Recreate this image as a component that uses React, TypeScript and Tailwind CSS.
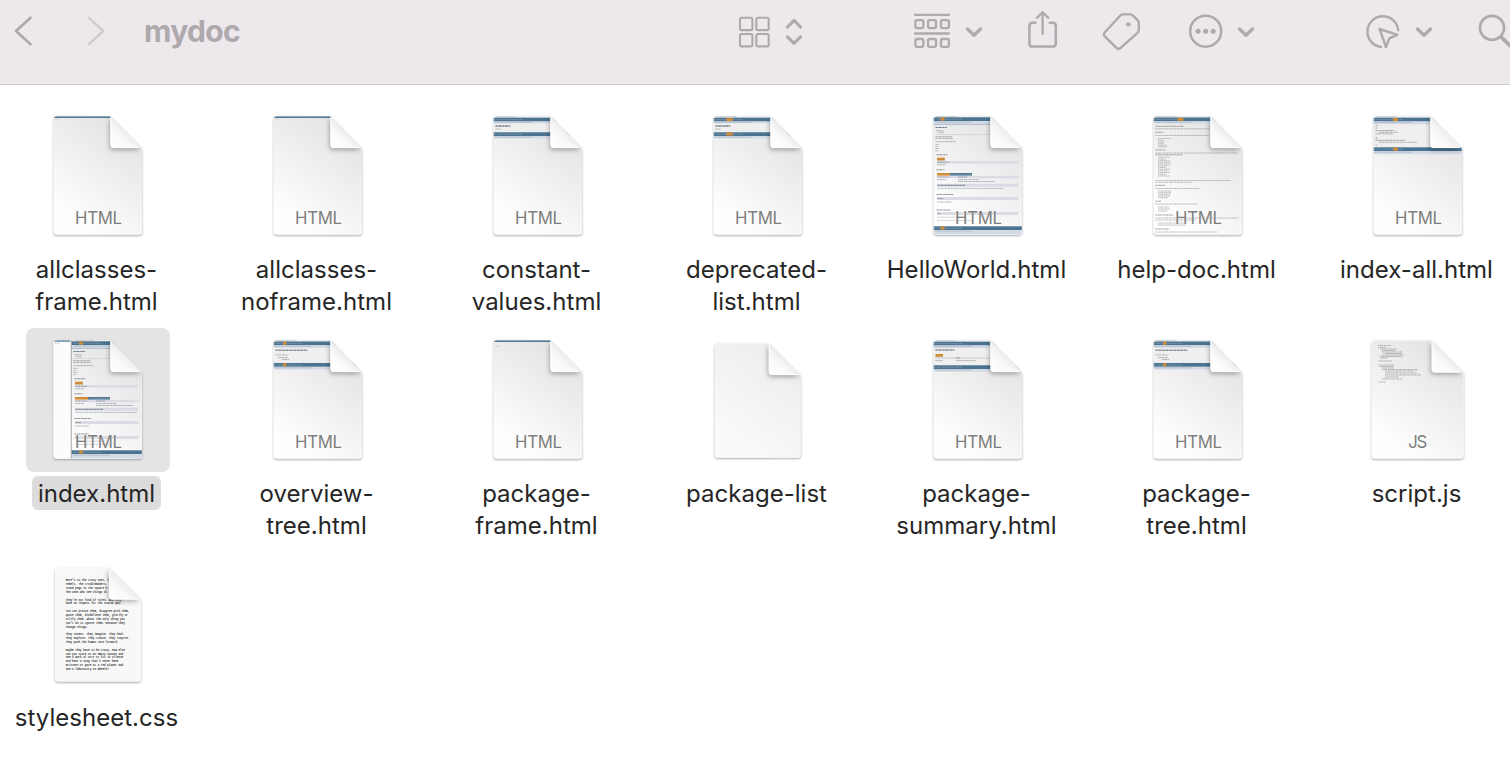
import React from "react";

type Kind =
  | "plain"
  | "constant"
  | "deprecated"
  | "hello"
  | "help"
  | "indexAll"
  | "index"
  | "tree"
  | "blankTop"
  | "summary"
  | "document"
  | "script"
  | "prose";

interface FileItem {
  lines: string[];
  kind: Kind;
  selected?: boolean;
}

const files: FileItem[] = [
  { lines: ["allclasses-", "frame.html"], kind: "plain" },
  { lines: ["allclasses-", "noframe.html"], kind: "plain" },
  { lines: ["constant-", "values.html"], kind: "constant" },
  { lines: ["deprecated-", "list.html"], kind: "deprecated" },
  { lines: ["HelloWorld.html"], kind: "hello" },
  { lines: ["help-doc.html"], kind: "help" },
  { lines: ["index-all.html"], kind: "indexAll" },
  { lines: ["index.html"], kind: "index", selected: true },
  { lines: ["overview-", "tree.html"], kind: "tree" },
  { lines: ["package-", "frame.html"], kind: "blankTop" },
  { lines: ["package-list"], kind: "document" },
  { lines: ["package-", "summary.html"], kind: "summary" },
  { lines: ["package-", "tree.html"], kind: "tree" },
  { lines: ["script.js"], kind: "script" },
  { lines: ["stylesheet.css"], kind: "prose" },
];

const BLUE = "#4a7391";
const PALE = "#d3dae5";
const ORANGE = "#d08c35";

/* A miniature line of unreadable print. */
function Print({ x, y, w, c = "#8d8f93", h = 0.8, d = "1.6 .35 .9 .3 2.3 .5 1.2 .3" }: { x: number; y: number; w: number; c?: string; h?: number; d?: string }) {
  return <line x1={x} x2={x + w} y1={y} y2={y} stroke={c} strokeWidth={h} strokeDasharray={d} strokeOpacity={0.82} />;
}

function NavBand({ y, x = 27, tab, tabW = 4, pale = 2.6 }: { y: number; x?: number; tab?: number; tabW?: number; pale?: number }) {
  return (
    <g>
      <rect x={x} y={y} width={120} height={3.8} fill={BLUE} />
      <Print x={x + 1.5} y={y + 1.9} w={28} c="#8ba5b8" />
      {tab !== undefined && <rect x={x + tab} y={y + 0.3} width={tabW} height={3} fill={ORANGE} />}
      <rect x={x} y={y + 3.8} width={120} height={pale} fill={PALE} />
      <Print x={x + 1.5} y={y + 4.8} w={37} c="#98a9bd" />
    </g>
  );
}

function ClassPage({ x, dx }: { x: number; dx: number }) {
  const o = (n: number) => n + dx;
  const bar = (y: number, h: number, c = "#d9dce3") => <rect x={o(31)} y={y} width={112.3 - o(31)} height={h} fill={c} />;
  return (
    <g>
      <Print x={o(30)} y={12.5} w={20} />
      <NavBand x={x} y={13.3} tab={7.5} pale={4} />
      <Print x={o(28)} y={20.4} w={58} c="#9aa9bb" />
      <Print x={o(29.5)} y={23.5} w={11.5} c="#45617a" h={1.2} />
      <Print x={o(30)} y={26.8} w={8} />
      <Print x={o(32)} y={28.6} w={6} />
      <rect x={o(29)} y={30} width={60} height={0.4} fill="#bbb" />
      <Print x={o(29.5)} y={32.8} w={17} h={1.1} />
      <Print x={o(29.5)} y={34.5} w={18} />
      <Print x={o(29.5)} y={37.6} w={20} />
      <Print x={o(29.5)} y={40.4} w={4} />
      <Print x={o(29.5)} y={42.6} w={2.8} />
      <Print x={o(29.5)} y={44.6} w={4} />
      <Print x={o(29.5)} y={46.7} w={2.6} />
      <Print x={o(30.5)} y={50.7} w={11} c="#777" h={1.1} />
      <rect x={o(31)} y={53.7} width={7.8} height={2.8} fill={ORANGE} />
      {bar(57, 2.5)}
      <Print x={o(31)} y={58.2} w={12} c="#64788d" />
      <Print x={o(31)} y={60.8} w={9} />
      <Print x={o(30.5)} y={65.7} w={8} c="#777" h={1.1} />
      <rect x={o(31)} y={69} width={13} height={2.6} fill={ORANGE} />
      <rect x={o(44)} y={69} width={22} height={2.6} fill={BLUE} />
      <Print x={o(45)} y={70.3} w={20} c="#93a9ba" />
      {bar(72, 2.2)}
      <Print x={o(31)} y={73} w={12} />
      <Print x={o(52)} y={73} w={9} c="#6f8092" />
      <Print x={o(31)} y={75.6} w={9} />
      <Print x={o(52)} y={75.6} w={21} />
      <Print x={o(52)} y={77.5} w={37} />
      {bar(79.8, 3)}
      <Print x={o(31.4)} y={81.3} w={28} c="#5f6770" h={1.1} />
      <Print x={o(31.4)} y={84.4} w={dx ? 62 : 66} c="#969ba4" />
      <Print x={o(30.5)} y={90.5} w={17} c="#777" h={1.1} />
      {bar(93, 3)}
      <Print x={o(31.4)} y={94.6} w={5.5} c="#5f6770" />
      <Print x={o(31.4)} y={98} w={14} />
      <Print x={o(30.5)} y={106} w={14} c="#777" h={1.1} />
      {bar(108, 3)}
      <Print x={o(31.4)} y={109.5} w={3} c="#5f6770" />
      <Print x={o(31.4)} y={113.2} w={29} c="#b0b4ba" />
      <Print x={o(31.4)} y={116.4} w={34} c="#b0b4ba" />
      <NavBand x={x} y={122.3} tab={7.5} pale={5} />
    </g>
  );
}

function Preview({ kind }: { kind: Kind }) {
  switch (kind) {
    case "plain":
    case "blankTop":
      return (
        <g>
          <rect x={27} y={11} width={90} height={3} fill="#4f7a94" />
          <Print x={29} y={kind === "plain" ? 15 : 18.2} w={4.5} c="#b5b7ba" h={0.7} />
        </g>
      );
    case "constant":
    case "deprecated": {
      const tab = kind === "deprecated" ? 13.3 : undefined;
      return (
        <g>
          <Print x={30} y={12.6} w={20} />
          <NavBand y={13.7} tab={tab} tabW={6.5} pale={2} />
          <rect x={27} y={19.5} width={90} height={8.8} fill="#efefef" />
          <Print x={29.5} y={22} w={15} c="#5c646c" h={1.3} />
          <Print x={29.5} y={25} w={5} />
          <NavBand y={28.3} tab={tab} tabW={6.5} pale={2.3} />
        </g>
      );
    }
    case "tree":
      return (
        <g>
          <Print x={30} y={12.6} w={20} />
          <NavBand y={13.5} tab={10} tabW={3.5} />
          <rect x={27} y={19.9} width={90} height={15.1} fill="#efefef" />
          <Print x={29.5} y={22.2} w={32} c="#70777e" h={1.4} />
          <Print x={29.5} y={27} w={12} />
          <Print x={32.5} y={29.6} w={9} />
          <Print x={36} y={31.5} w={7} />
          <NavBand y={35} tab={10} tabW={3.5} />
        </g>
      );
    case "summary":
      return (
        <g>
          <Print x={30} y={12.6} w={20} />
          <NavBand y={13.7} pale={2.6} />
          <rect x={27} y={20.1} width={90} height={17.2} fill="#efefef" />
          <Print x={29.5} y={22} w={19} c="#70777e" h={1.3} />
          <rect x={29.5} y={26} width={7.5} height={2.8} fill={ORANGE} />
          <rect x={29.5} y={29} width={90} height={2.1} fill="#d9dce3" />
          <Print x={50} y={30} w={4} c="#646b75" />
          <Print x={29.5} y={32.6} w={7} />
          <Print x={50} y={32.6} w={20} />
          <NavBand y={37.3} pale={2.6} />
        </g>
      );
    case "indexAll":
      return (
        <g>
          <Print x={30} y={12.6} w={20} />
          <NavBand y={13.7} tab={20} tabW={5} pale={3} />
          <rect x={27} y={20.5} width={90} height={22.8} fill="#efefef" />
          <Print x={29.5} y={21.5} w={3} />
          <Print x={29.5} y={24} w={2} c="#555" />
          <Print x={29.5} y={26.6} w={19} c="#71777f" />
          <Print x={33} y={28.3} w={19} />
          <Print x={29.5} y={29.8} w={18} />
          <Print x={29.5} y={34} w={2} c="#555" />
          <Print x={29.5} y={36.4} w={30} c="#71777f" />
          <Print x={33} y={38.3} w={38} />
          <Print x={29.5} y={41} w={2} />
          <NavBand y={43.3} tab={20} tabW={5} pale={3} />
        </g>
      );
    case "hello":
      return <ClassPage x={27} dx={0} />;
    case "index":
      return (
        <g>
          <rect x={27} y={11} width={18} height={121} fill="#fcfcfc" />
          <rect x={27} y={11} width={17.3} height={2.7} fill="#4f7a94" />
          <Print x={29} y={15.3} w={5} c="#aaa" h={0.7} />
          <ClassPage x={45.6} dx={18} />
          <rect x={44.8} y={12} width={0.8} height={120} fill="#8f9396" />
        </g>
      );
    case "help": {
      const rows: [number, number, number][] = [
        [2.5, 22.3, 28], [2.5, 24.8, 55], [2.5, 28.3, 8], [2.5, 31.5, 53],
        [5, 34.5, 13], [5, 36.3, 5], [5, 38, 7], [5, 39.7, 6], [5, 41.3, 9], [5, 43, 9],
        [2.5, 46, 10], [2.5, 49, 82], [2.5, 50.8, 27],
        [5, 53.2, 12], [5, 55, 8], [5, 56.7, 12], [5, 58.4, 12], [5, 60.1, 13], [5, 61.8, 11],
        [5, 63.5, 8], [5, 65.2, 12], [5, 66.9, 11], [5, 68.6, 12], [5, 70.3, 8], [5, 72, 12],
        [2.5, 76.5, 75], [2.5, 78.3, 37], [2.5, 81.3, 10], [2.5, 84.5, 44],
        [5, 87, 13], [5, 88.7, 13], [5, 90.4, 12], [5, 92.1, 12], [5, 93.8, 10],
        [2.5, 97.2, 6], [2.5, 100, 42], [5, 103, 11], [5, 105, 12], [5, 107, 9],
        [2.5, 111, 18], [2.5, 114, 83], [2.5, 116, 40], [5, 119, 26], [5, 121, 28],
        [2.5, 125, 14], [2.5, 128, 62],
      ];
      return (
        <g>
          <Print x={30} y={12.5} w={20} />
          <NavBand y={13.5} tab={24.5} tabW={6} pale={2.2} />
          {rows.map(([x, y, w], i) => (
            <Print key={i} x={27 + x} y={y} w={w} c={x === 2.5 && w < 30 ? "#6c6c6c" : "#999"} />
          ))}
        </g>
      );
    }
    case "script": {
      const rows: [number, number, number][] = [
        [32, 17.5, 13], [32, 19.5, 8], [34, 21, 17], [36, 22.5, 13], [36, 24, 20], [39, 25.5, 17],
        [36, 27, 22], [34, 28.5, 22], [34, 30, 8], [32, 33, 14], [32, 37, 16],
        [34, 38.5, 14], [36, 40, 12], [36, 41.5, 36], [39, 43, 30], [39, 45, 32], [39, 47, 36],
        [39, 49, 14], [36, 51, 20], [32, 54, 8],
      ];
      return (
        <g>
          {rows.map(([x, y, w], i) => (
            <Print key={i} x={x} y={y} w={w} c="#8f8f8f" h={0.8} />
          ))}
        </g>
      );
    }
    default:
      return null;
  }
}

/* Baseline of each line of the text document, with its words. */
const prose: [number, string][] = [
  [29.2, "Here's to the crazy ones. The"],
  [33.1, "rebels. The troublemakers."],
  [37, "round pegs in the square h"],
  [40.8, "The ones who see things di"],
  [48.5, "They're not fond of rules. And they"],
  [52.3, "have no respect for the status quo."],
  [60, "You can praise them, disagree with them,"],
  [63.9, "quote them, disbelieve them, glorify or"],
  [67.8, "vilify them. About the only thing you"],
  [71.6, "can't do is ignore them. Because they"],
  [75.5, "change things."],
  [83.2, "They invent. They imagine. They heal."],
  [87.1, "They explore. They create. They inspire."],
  [90.9, "They push the human race forward."],
  [98.7, "Maybe they have to be crazy. How else"],
  [102.6, "can you stare at an empty canvas and"],
  [106.4, "see a work of art? Or sit in silence"],
  [110.3, "and hear a song that's never been"],
  [114.1, "written? Or gaze at a red planet and"],
  [117.9, "see a laboratory on wheels?"],
];

/* left, top, right, bottom, fold x, fold y */
function sheetBox(kind: Kind): [number, number, number, number, number, number] {
  if (kind === "document") return [28.7, 15.5, 114.7, 129.7, 82.8, 47];
  if (kind === "script") return [25.7, 12.4, 117.6, 130.6, 85.7, 44.5];
  if (kind === "prose") return [29, 16, 115, 129.7, 83, 47.5];
  return [27.7, 12.2, 116, 130.6, 84.5, 44];
}

function FileIcon({ kind, id }: { kind: Kind; id: string }) {
  const [l, t, r, b, fx, fy] = sheetBox(kind);
  const sheet = `M${l + 3} ${t}H${fx}L${r - 1} ${fy - 0.8}Q${r} ${fy + 0.4} ${r} ${fy + 2}V${b - 3}Q${r} ${b} ${r - 3} ${b}H${l + 3}Q${l} ${b} ${l} ${b - 3}V${t + 3}Q${l} ${t} ${l + 3} ${t}Z`;
  const fold = `M${fx} ${t}L${r - 1} ${fy - 0.8}Q${r - 1} ${fy} ${r - 3} ${fy}H${fx + 3}Q${fx} ${fy} ${fx} ${fy - 3}Z`;
  const label = kind === "document" || kind === "prose" ? null : kind === "script" ? "JS" : "HTML";
  return (
    <svg width="144" height="144" viewBox="0 0 144 144" className="block">
      <defs>
        <linearGradient id={`${id}p`} x1="0.8" y1="0.15" x2="0.35" y2="0.95">
          <stop offset="0" stopColor="#e5e5e5" />
          <stop offset="0.5" stopColor="#f1f1f1" />
          <stop offset="1" stopColor="#fefefe" />
        </linearGradient>
        <linearGradient id={`${id}f`} x1="0.05" y1="0.95" x2="0.55" y2="0.4">
          <stop offset="0" stopColor="#ffffff" />
          <stop offset="0.5" stopColor="#fafafa" />
          <stop offset="1" stopColor="#e9e9e9" />
        </linearGradient>
        <clipPath id={`${id}c`}>
          <path d={sheet} />
        </clipPath>
        <filter id={`${id}s`} x="-20%" y="-20%" width="140%" height="140%">
          <feGaussianBlur stdDeviation="1.1" />
        </filter>
        <filter id={`${id}b`} x="-50%" y="-50%" width="200%" height="200%">
          <feGaussianBlur stdDeviation="2.4" />
        </filter>
      </defs>
      <path d={sheet} fill="#000" fillOpacity="0.36" filter={`url(#${id}s)`} transform="translate(0 1.1)" />
      <path d={sheet} fill={kind === "prose" ? "#f8f8f8" : kind === "document" ? "#f6f6f6" : "#fff"} />
      {kind !== "prose" && <path d={sheet} fill={`url(#${id}p)`} fillOpacity={kind === "document" ? 0.5 : 1} />}
      <g clipPath={`url(#${id}c)`}>
        <Preview kind={kind} />
        {kind === "prose" && (
          <g fill="#3c3c3c" stroke="#3c3c3c" strokeWidth="0.1" fontFamily='"Liberation Mono", monospace' fontSize="2.66">
            {prose.map(([y, s]) => (
              <text key={y} x="39.7" y={y} textLength={s.length * 1.597}>
                {s}
              </text>
            ))}
          </g>
        )}
        <path d={fold} fill="#000" fillOpacity="0.34" filter={`url(#${id}b)`} transform="translate(-0.8 1.8)" />
      </g>
      <path d={sheet} fill="none" stroke="#fff" strokeOpacity="0.35" strokeWidth="0.8" />
      <path d={fold} fill={`url(#${id}f)`} />
      <path d={`M${fx + 0.4} ${t + 1}V${fy - 3}Q${fx + 0.4} ${fy - 0.4} ${fx + 3} ${fy - 0.4}H${r - 3}`} fill="none" stroke="#fff" strokeWidth="1" />
      {label && (
        <text
          x={label === "JS" ? 62.3 : 49}
          y="120.3"
          fill="#7d7d7d"
          fontFamily="Inter, sans-serif"
          fontSize="16.8"
          stroke="#fff"
          strokeOpacity="0.5"
          strokeWidth="1.2"
          paintOrder="stroke"
          textLength={label === "JS" ? 19 : 47}
        >
          {label}
        </text>
      )}
    </svg>
  );
}

function FileCell({ file, index }: { file: FileItem; index: number }) {
  return (
    <div className="flex h-[224px] flex-col items-center">
      <div className={file.selected ? "rounded-lg bg-[#e4e4e4]" : "rounded-lg"}>
        <FileIcon kind={file.kind} id={`f${index}`} />
      </div>
      <div
        className={`mt-1 mr-[3px] rounded-md px-1.5 pt-[2px] text-center text-[24px] leading-8 tracking-[0.02px] whitespace-nowrap text-[#262626] ${file.selected ? "bg-[#dcdcdc]" : ""}`}
      >
        {file.lines.map((line) => (
          <div key={line}>{line}</div>
        ))}
      </div>
    </div>
  );
}

/* Toolbar glyphs share the toolbar's own coordinate space. */
function Glyph({ x, w, className = "", sw = 2.5, children }: { x: number; w: number; className?: string; sw?: number; children: React.ReactNode }) {
  return (
    <svg
      width={w}
      height="40"
      viewBox={`${x} 11 ${w} 40`}
      className={`shrink-0 ${className}`}
      fill="none"
      stroke="currentColor"
      strokeWidth={sw}
      strokeLinecap="round"
      strokeLinejoin="round"
    >
      {children}
    </svg>
  );
}

function Toolbar() {
  return (
    <header className="flex h-[85px] items-start overflow-hidden border-b border-[#d0cbcf] bg-[#ede8ec] pt-[11px] text-[#aea9ad]">
      <Glyph x={12} w={24} className="ml-3" sw={2.7}>
        <path d="M30.5 17.8L16 31L30.5 44.2" />
      </Glyph>
      <Glyph x={84} w={24} className="ml-12 text-[#d0cbcf]" sw={2.5}>
        <path d="M89 17.8L103.2 31L89 44.2" />
      </Glyph>
      <h1 className="ml-9 w-[120px] shrink-0 text-[30px] leading-10 font-bold tracking-[-0.7px]">mydoc</h1>
      <Glyph x={734} w={72} className="ml-[470px]" sw={2.1}>
        <rect x="740" y="17.7" width="12.4" height="12.4" rx="1.6" />
        <rect x="756.3" y="17.7" width="12.4" height="12.4" rx="1.6" />
        <rect x="740" y="34" width="12.4" height="12.4" rx="1.6" />
        <rect x="756.3" y="34" width="12.4" height="12.4" rx="1.6" />
        <path d="M787.5 27L794 20.4L800.5 27M787.5 36.8L794 43.4L800.5 36.8" strokeWidth="3.1" />
      </Glyph>
      <Glyph x={910} w={76} className="ml-[104px]" sw={2.3}>
        <path d="M915 14.8H949M915 33.5H949" />
        {[915.4, 928.1, 941].map((x) => (
          <g key={x}>
            <rect x={x} y="20.2" width="7.9" height="7.9" rx="1.6" />
            <rect x={x} y="39" width="7.9" height="7.9" rx="1.6" />
          </g>
        ))}
        <path d="M967.5 29L974 35.3L980.5 29" strokeWidth="3.3" />
      </Glyph>
      <Glyph x={1024} w={38} className="ml-[38px]" sw={2.5}>
        <path d="M1036.5 22.8H1032.5Q1029.4 22.8 1029.4 26V43.4Q1029.4 46.6 1032.5 46.6H1052.7Q1055.8 46.6 1055.8 43.4V26Q1055.8 22.8 1052.7 22.8H1048.7" strokeLinecap="butt" />
        <path d="M1042.6 34V12.4M1036.9 17.8L1042.6 12.3L1048.3 17.8" strokeWidth="2.3" />
      </Glyph>
      <Glyph x={1098} w={44} className="ml-9" sw={2.4}>
        <path d="M1120.6 15.3Q1121.8 14.4 1123.2 14.4H1130Q1131.8 14.4 1133 15.6L1137.6 20.2Q1138.8 21.4 1138.8 23.2V29.8Q1138.8 31.6 1137.5 32.9L1121 47.7Q1118.5 50 1116.2 47.6L1105 36.7Q1102.8 34.4 1105.1 32Z" />
        <circle cx="1128.4" cy="24.4" r="2.2" fill="currentColor" stroke="none" />
      </Glyph>
      <Glyph x={1186} w={72} className="ml-11" sw={2.5}>
        <circle cx="1205.7" cy="31.2" r="15.5" />
        <g fill="currentColor" stroke="none">
          <circle cx="1198.1" cy="31.2" r="2.5" />
          <circle cx="1205.7" cy="31.2" r="2.5" />
          <circle cx="1213.2" cy="31.2" r="2.5" />
        </g>
        <path d="M1239.5 29L1246 35.3L1252.5 29" strokeWidth="3.3" />
      </Glyph>
      <Glyph x={1362} w={74} className="ml-[104px]" sw={2.4}>
        <path d="M1398.2 30.2A15.4 15.4 0 1 0 1381 47" />
        <path d="M1379.6 29L1397.3 34.8L1389.3 38.4L1386 47Z" />
        <path d="M1417.5 29L1424 35.3L1430.5 29" strokeWidth="3.3" />
      </Glyph>
      <Glyph x={1474} w={40} className="ml-[38px]" sw={2.7}>
        <circle cx="1492" cy="27.8" r="12" />
        <path d="M1501.5 37.3L1513 48.5" strokeWidth="3.8" />
      </Glyph>
    </header>
  );
}

export default function App() {
  return (
    <main className="h-[772px] w-[1510px] overflow-hidden bg-white font-['Inter',sans-serif]">
      <Toolbar />
      <section className="-ml-3 grid w-[1540px] grid-cols-[repeat(7,220px)] pt-[19px]">
        {files.map((file, i) => (
          <FileCell key={file.lines.join("")} file={file} index={i} />
        ))}
      </section>
    </main>
  );
}
